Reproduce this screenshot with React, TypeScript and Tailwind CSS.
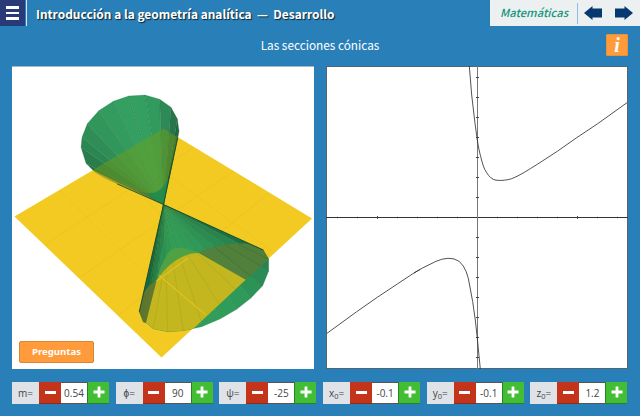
import type { ReactNode } from "react";

type Point = [number, number];

const APEX: Point = [163.5, 204.5];
const upperRim: Point[] = [
  [92.7, 170], [86, 163.3], [81, 147.3], [82, 137.3], [87.3, 123.7], [98.7, 110.7],
  [113.3, 101.3], [128.7, 96], [145, 95], [159.7, 99.3], [171, 107.3],
  [177.3, 118.7], [179, 130.7], [177.7, 138],
];
const upperShades = [
  "#237245", "#287d4b", "#2b8751", "#2e8e56", "#309659", "#329b5d", "#339f60",
  "#339f60", "#319a5d", "#2d8955", "#27764b", "#216641", "#1c5938",
];

const lowerRim: Point[] = [
  [263.3, 250], [268.7, 259.3], [268.7, 271], [262.7, 285.7], [251, 298],
  [236.7, 309.3], [220, 319], [201.7, 326.7], [183.3, 330.7], [167.7, 331.7],
  [153.3, 328.7], [146, 322.7], [143.3, 322], [139.3, 311.7],
];
const lowerShades = [
  "#23784a", "#278450", "#2a8c54", "#2c9356", "#2e9958", "#2f9c59", "#309e5a",
  "#309e5a", "#2e9957", "#2c9153", "#28844c", "#217443", "#1c663c",
];

const triangle = (a: Point, b: Point) => [APEX, a, b].map((p) => p.join(",")).join(" ");

function Cone({ rim, shades }: { rim: Point[]; shades: string[] }) {
  return (
    <g>
      {shades.map((fill, i) => (
        <polygon
          key={i}
          points={triangle(rim[i], rim[i + 1])}
          fill={fill}
          stroke="#17643a"
          strokeOpacity="0.5"
          strokeWidth="0.4"
        />
      ))}
    </g>
  );
}

function Scene() {
  return (
    <svg viewBox="12 66 302 303" className="block h-full w-full">
      <polygon points="14.5,216.5 163.5,128.5 312,218.5 161.5,357.5" fill="#f2ca22" />
      <g fill="none" stroke="#e6bb1e" strokeWidth="0.8">
        <path d="M45.500,244.500 L194,147 M80.500,277 L233.500,171 M119,315 L269,193" strokeOpacity="0.5" />
        <path d="M60,191 L196,324 M111,160.500 L231,293 M164,172 L273,252" strokeOpacity="0.35" />
      </g>

      <Cone rim={upperRim} shades={upperShades} />
      <path
        d="M92.700,170 L163.500,128.500 L177.700,137.500 L166,186 Q161,193 154,193.500 Q145,194 117,184 Z"
        fill="#7ba112"
        fillOpacity="0.42"
      />
      <path d="M92.700,170 Q96,175 117.300,184 L151,198.500 L148,193 Z" fill="#6f862c" fillOpacity="0.45" />
      <path d="M163.500,204.500 L146,193 Q160,195 167,180 L169,178 Z" fill="#208b4c" fillOpacity="0.85" />
      <path d="M163.500,204.500 L117.300,184 M163.500,204.500 L177.700,137.500" stroke="#11502d" strokeWidth="0.9" />

      <Cone rim={lowerRim} shades={lowerShades} />
      <path d="M163.500,204.500 L164,240 L153,284 L144,322 L139.300,311.700 Z" fill="#176d3e" fillOpacity="0.25" />
      <path d="M163.500,204.500 L263.300,250 L240,243 Z" fill="#126239" fillOpacity="0.4" />
      <path
        d="M156.700,280 C159,270 164,259 169,252 Q173,247 184,248 L198.300,252.700 C179,256 166,265 156.700,280 Z"
        fill="#50a044"
      />
      <path
        d="M198.300,252.700 C210,247 232,242 249,244 L263.300,250 L268.700,259.300 L245.700,279.700 Z"
        fill="#557f39"
        fillOpacity="0.92"
      />
      <path d="M139.300,311.700 L143.300,294 Q147,286 156.700,280 L147,323 L143.300,322 Z" fill="#68782c" fillOpacity="0.85" />
      <path
        d="M156.700,280 C168,263 182,254 198.300,252.700 L245.700,279.700 L193.300,328.700 L183.300,330.700 L167.700,331.700 L153.300,328.700 L146,322.700 Z"
        fill="#c3b61f"
      />
      <path
        d="M163,273 L153.300,328.700 M166,268 L167.700,331.700 M173,262 L183.300,330.700 M180,257 L201,321 M187,254 L219,304 M197,253 L235,289"
        fill="none"
        stroke="#87931f"
        strokeWidth="0.6"
        strokeOpacity="0.4"
      />
      <path d="M156.500,281 L188,258 M159,275.500 L206,315" stroke="#edc91f" strokeWidth="1" fill="none" />
      <g stroke="#285f32" strokeWidth="0.6" strokeOpacity="0.5">
        <path d="M213,246 L262.700,285.700 M224,244 L268.700,271 M238,244 L268.700,259.300" />
      </g>
      <path d="M163.500,204.500 L263.300,250 M163.500,204.500 L139.300,311.700" stroke="#124f2e" strokeWidth="0.9" />
    </svg>
  );
}

const ticks = [-7, -6, -5, -4, -3, -2, -1, 1, 2, 3, 4, 5, 6, 7];

function Graph() {
  return (
    <svg viewBox="326 66 302 303" className="block h-full w-full" fill="none">
      <path d="M326,217.500 H628" stroke="#333" strokeWidth="1" />
      <path d="M477.500,66 V369" stroke="#777" strokeWidth="1" />
      {ticks.map((n) => (
        <g key={n} stroke="#444" strokeWidth="1">
          <path d={`M476,${217.5 + n * 20} H479`} />
          <path
            d={`M${477.5 + n * 20},${n % 5 === 0 ? 216 : 216.5} v${n % 5 === 0 ? 3 : 2}`}
            strokeOpacity={n % 5 === 0 ? 0.9 : 0.4}
          />
        </g>
      ))}
      <g stroke="#333" strokeWidth="0.85">
        <path d="M469.300,66 L471.700,95 L475,123.300 L477.300,140 C478.300,147 479.500,152 480.700,156.700 C482.500,164 484,169 486.700,172.700 C489,176.500 492,179.500 496,180.200 C502,180.800 507,180.200 511.700,178.700 C520,175.500 528,170 537.300,164.300 L557.300,151.300 L576.700,137.700 L597.700,123.700 L627,102.700" />
        <path d="M327,333.300 L356.700,311.700 L377.300,297.300 L397.300,284 L415,272.300 Q422,268 430,264.300 Q436,261 441.700,259.300 Q448,257.500 454,258.900 Q460,260.500 463.300,266 Q466.500,271 468.300,278.300 L472.700,301.700 L475.300,320 L477.300,338.300 L480.300,369" />
        <path d="M414,273 L420,269.500" />
      </g>
    </svg>
  );
}

function Arrow({ flip = false }: { flip?: boolean }) {
  return (
    <svg viewBox="0 0 18 14" className={flip ? "h-[14px] w-[18px] -scale-x-100" : "h-[14px] w-[18px]"}>
      <path d="M0,2.500 H9.500 V0 L18,7 L9.500,14 V11.500 H0 Z" fill="#063970" />
    </svg>
  );
}

function Stepper({ label, value }: { label: ReactNode; value: string }) {
  return (
    <div className="flex h-[22px] w-[97px] shrink-0 font-['Open_Sans',sans-serif] text-[10px] text-[#444]">
      <div className="flex w-[27px] items-center justify-center bg-[#dfe3e8]">
        <span className="whitespace-nowrap leading-none">{label}=</span>
      </div>
      <button className="flex w-[22px] items-center justify-center border-b border-[#8d2b18] bg-[#c3341a]">
        <span className="h-[3px] w-[11px] bg-white" />
      </button>
      <div className="flex w-[26px] items-center justify-center border-y border-[#555] bg-white leading-none">{value}</div>
      <button className="flex w-[22px] items-center justify-center border-b border-l border-[#2a8028] bg-[#43bd33]">
        <svg viewBox="0 0 12 12" className="size-3">
          <path d="M6,0.500 V11.500 M0.500,6 H11.500" stroke="white" strokeWidth="2.800" />
        </svg>
      </button>
    </div>
  );
}

const Zero = () => <sub className="-bottom-[2px] text-[7.5px]">0</sub>;

export default function App() {
  return (
    <main className="flex h-[416px] w-[640px] flex-col overflow-hidden bg-[#2980b9] font-['Noto_Sans_CJK_SC',sans-serif] text-white">
      <header className="flex h-[26px] shrink-0 items-center">
        <button className="flex h-[26px] w-[25px] flex-col items-center justify-center gap-[3px] bg-[#283a78]">
          <span className="h-[3px] w-[13px] bg-white" />
          <span className="h-[2px] w-[13px] bg-white" />
          <span className="h-[3px] w-[13px] bg-white" />
        </button>
        <div className="ml-px h-full w-px bg-[#d4e6f2]" />
        <h1 className="ml-[9px] whitespace-pre pt-px text-[11.95px] font-bold leading-none [text-shadow:1px_1px_1px_#123]">
          Introducción a la geometría analítica  —  Desarrollo
        </h1>
        <div className="ml-auto flex h-full w-[150px] items-center bg-[#ecf0f1]">
          <span className="ml-[10px] w-[67px] whitespace-nowrap text-[11.2px] font-medium italic leading-none text-[#16967f]">Matemáticas</span>
          <div className="ml-[10px] mr-[6px] h-[21px] w-px bg-[#8ebbe0]" />
          <Arrow flip />
          <div className="w-[13px]" />
          <Arrow />
        </div>
      </header>

      <div className="grid h-10 shrink-0 grid-cols-[1fr_auto_1fr] items-center px-3">
        <h2 className="col-start-2 -mt-[2px] text-[11.8px] leading-none">Las secciones cónicas</h2>
        <button className="-mt-[2px] flex h-[22px] w-[22px] items-center justify-center justify-self-end rounded-[1px] border border-[#e8913c] bg-[#ff9b3b] font-['Liberation_Serif',serif] text-[20px] font-bold italic leading-none">
          i
        </button>
      </div>

      <div className="flex h-[303px] shrink-0 gap-3 pl-3">
        <section className="grid w-[302px] border-t border-[#a5b8c4] bg-white">
          <div className="col-start-1 row-start-1 -mt-px h-[303px]">
            <Scene />
          </div>
          <button className="z-10 col-start-1 row-start-1 mb-[6px] ml-[7px] h-[22px] w-[75px] self-end rounded-[2px] border border-[#d78632] bg-[#ff9b3b] font-['Noto_Sans',sans-serif] text-[9.6px] font-bold leading-none">
            Preguntas
          </button>
        </section>
        <section className="w-[302px] border border-[#4e6676] bg-white">
          <div className="-ml-px -mt-px h-[303px] w-[302px]">
            <Graph />
          </div>
        </section>
      </div>

      <footer className="flex h-[47px] shrink-0 items-center gap-[6.7px] pl-3">
        <Stepper label="m" value="0.54" />
        <Stepper label="ϕ" value="90" />
        <Stepper label="ψ" value="-25" />
        <Stepper label={<>x<Zero /></>} value="-0.1" />
        <Stepper label={<>y<Zero /></>} value="-0.1" />
        <Stepper label={<>z<Zero /></>} value="1.2" />
      </footer>
    </main>
  );
}
